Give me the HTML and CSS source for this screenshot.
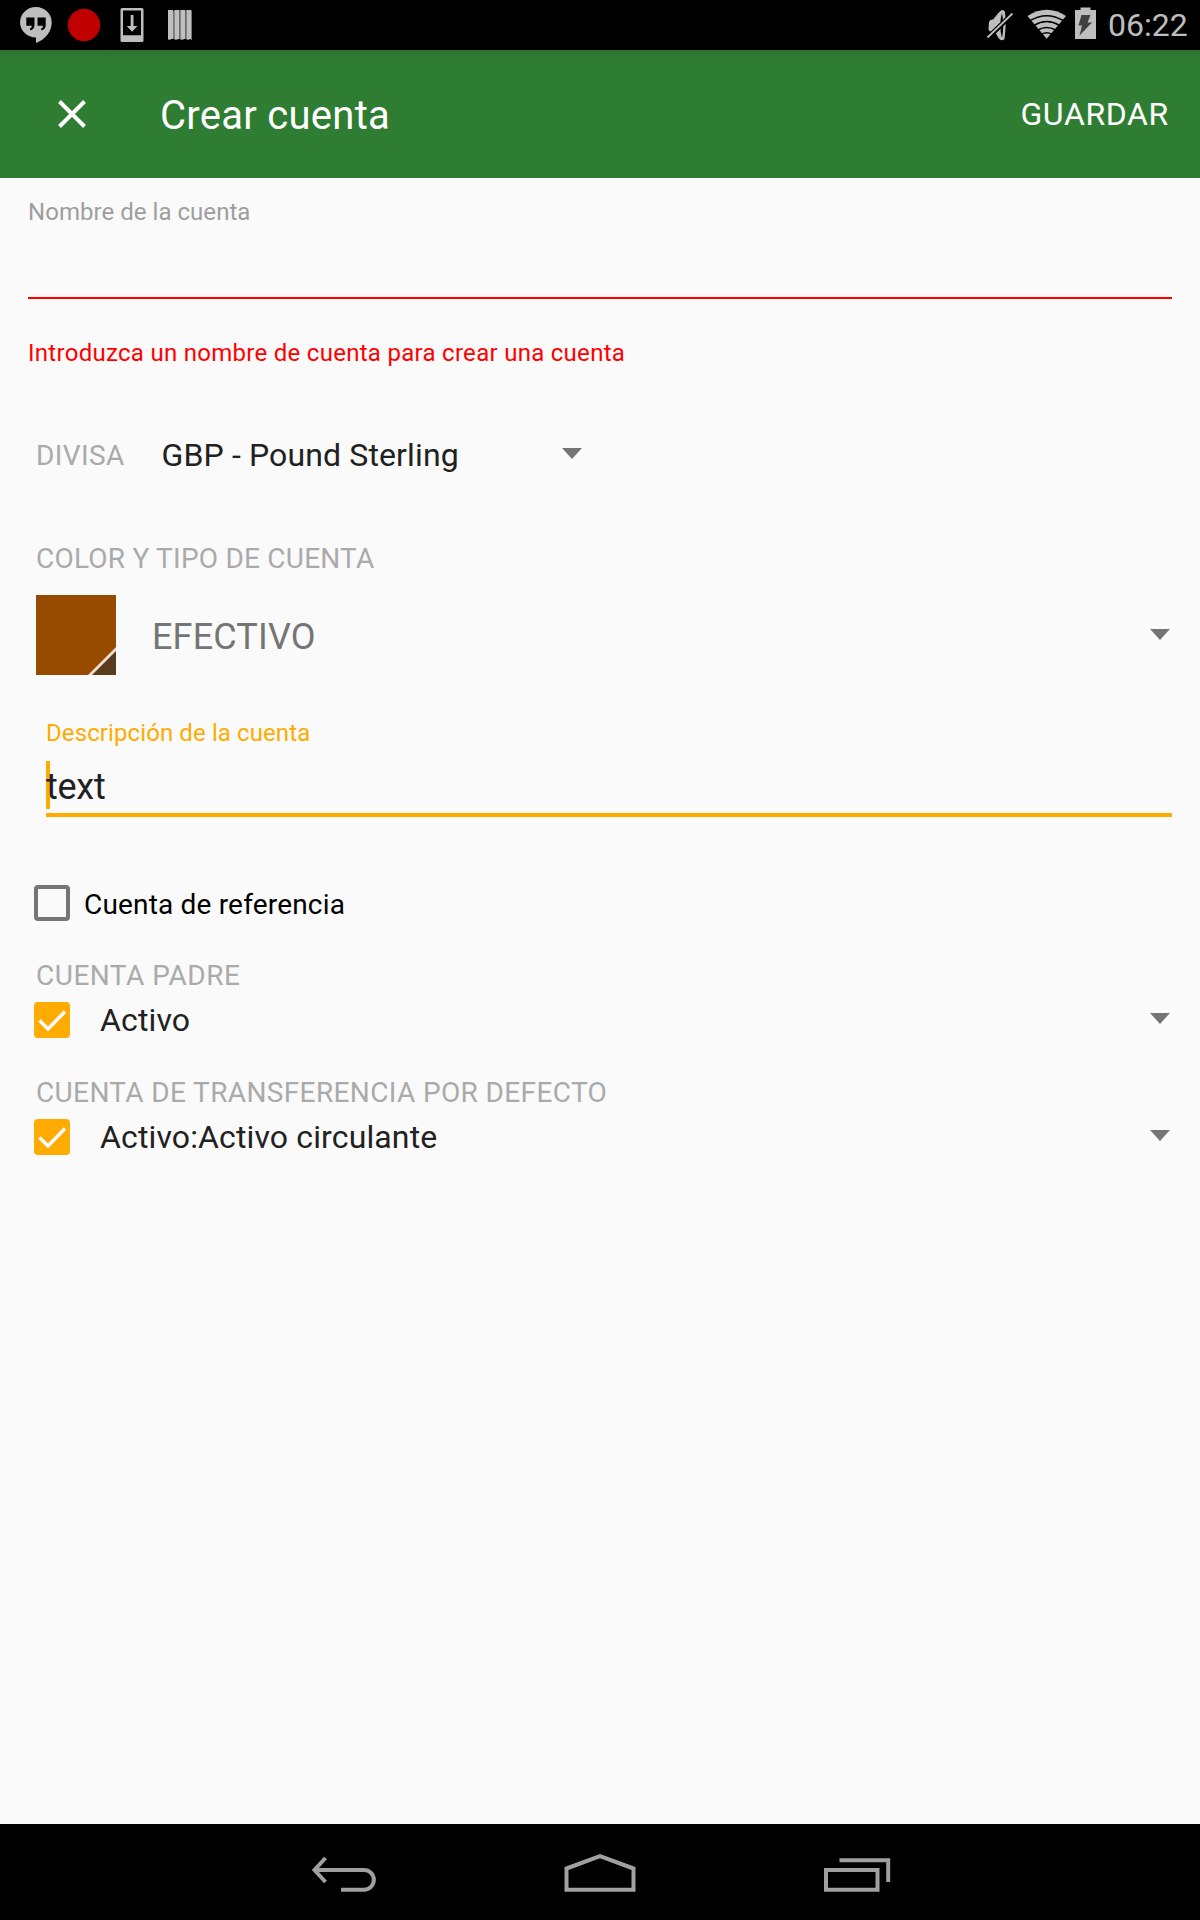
FILE: index.html
```html
<!DOCTYPE html>
<html lang="es">
<head>
<meta charset="utf-8">
<title>Crear cuenta</title>
<link rel="stylesheet" href="styles.css">
</head>
<body>
<div class="screen">
  <header class="status">
    <svg class="status-icons" width="200" height="50" viewBox="0 0 200 50">
      <path fill="#bebebe" fill-rule="evenodd" d="M36 7a15.700 15 0 0 0 0 30.500v5.500c9-3.500 15.700-11 15.700-20.500A15.700 15.500 0 0 0 36 7zM26.300 17.500h8.200v7.500c0 3-1.600 5-4.500 5.500v-2c1.300-.5 1.800-1.300 1.800-2.800h-5.500zM37.500 17.500h8.200v7.500c0 3-1.600 5-4.500 5.500v-2c1.300-.5 1.800-1.300 1.800-2.800h-5.500z"/>
      <circle cx="84" cy="25" r="16.200" fill="#c00000"/>
      <path fill="#bebebe" fill-rule="evenodd" d="M122 8h20a1.500 1.500 0 0 1 1.500 1.500v31a1.500 1.500 0 0 1-1.500 1.500h-20a1.500 1.500 0 0 1-1.500-1.500v-31a1.500 1.500 0 0 1 1.500-1.500zM123 10.500v24.700h18V10.500z"/>
      <path fill="#bebebe" d="M130.700 15h2.800v11h4l-5.400 5.700-5.400-5.700h4z"/>
      <g fill="#bebebe"><path d="M168 10h5v29h-5zM174.300 10h5v29h-5zM180.300 10h5v29h-5zM186.300 10h5v29h-5z"/></g>
      <path fill="#777" d="M173 11h1v28h-1zM179.200 11h1v28h-1zM185.200 11h1v28h-1zM191 11h1v29h-1zM168 39h3v1h-3zM174.500 39h3v1h-3zM180.500 39h3v1h-3zM186.500 39h3v1h-3z"/>
    </svg>
    <div class="status-right">
      <svg width="120" height="50" viewBox="980 0 120 50">
        <path fill="#bebebe" fill-rule="evenodd" d="M989 22q1-3 4-2.500l5-6q5-6 7-1.500q1.500 12-.5 27q-3 3-6-1l-4-7q-6 2-6-2.500zM1002 13q-3.500 12 0 25q2.500-12 0-25z"/>
        <path d="M987 38.500l26-25" stroke="#000" stroke-width="5"/>
        <path d="M987.500 37.500l25-24" stroke="#bebebe" stroke-width="1.800"/>
        <path fill="#bebebe" d="M1046.700 38.800L1027.500 16q19.200-12.500 38.500 0z"/>
        <g fill="none" stroke="#000" stroke-width="1.500"><path d="M1030 20.700q16.700-10 33.500 0M1034 25.300q12.700-7.500 25.500 0M1038 30q8.700-5 17.500 0M1041.500 34.300q5.200-3 10.500 0"/></g>
        <path fill="#bebebe" d="M1075 10h5.500V7.500h10V10h5.500v29h-21z"/>
        <path fill="#404040" d="M1081.500 15h9l-3 7.500h4.500l-12.500 13 2.500-10h-3.500z"/>
      </svg>
      <span class="clock">06:22</span>
    </div>
  </header>
  <div class="appbar">
    <svg class="close" width="28" height="28" viewBox="0 0 28 28"><path d="M1.500 1.500l25 25M26.500 1.500l-25 25" stroke="#fff" stroke-width="4"/></svg>
    <h1 class="title">Crear cuenta</h1>
    <span class="save">GUARDAR</span>
  </div>
  <main class="form">
    <div class="name-field">
      <div class="hint">Nombre de la cuenta</div>
      <div class="name-input"></div>
      <div class="hint error">Introduzca un nombre de cuenta para crear una cuenta</div>
    </div>
    <div class="currency">
      <span class="label">DIVISA</span>
      <span class="value">GBP - Pound Sterling</span>
      <i class="arrow"></i>
    </div>
    <div class="label type-label">COLOR Y TIPO DE CUENTA</div>
    <div class="type-row">
      <svg width="80" height="80" viewBox="0 0 80 80"><path fill="#964b00" d="M0 0h80v80H0z"/><path fill="#5a3c1e" d="M80 54.500V80H54.500z"/><path d="M81 53L53 81" stroke="#efdfd2" stroke-width="2.800"/></svg>
      <span class="type">EFECTIVO</span>
      <i class="arrow"></i>
    </div>
    <div class="desc-field">
      <div class="hint accent">Descripción de la cuenta</div>
      <div class="desc-input"><i class="cursor"></i>text</div>
    </div>
    <div class="check-row placeholder-row">
      <i class="box"></i><span class="check-text">Cuenta de referencia</span>
    </div>
    <div class="group parent">
      <div class="label">CUENTA PADRE</div>
      <div class="check-row">
        <svg class="box-on" width="36" height="36" viewBox="0 0 36 36"><path d="M5.500 18.500l8.500 8.500L31 9.500" fill="none" stroke="#fafafa" stroke-width="3.600"/></svg>
        <span class="value">Activo</span><i class="arrow"></i>
      </div>
    </div>
    <div class="group">
      <div class="label">CUENTA DE TRANSFERENCIA POR DEFECTO</div>
      <div class="check-row">
        <svg class="box-on" width="36" height="36" viewBox="0 0 36 36"><path d="M5.500 18.500l8.500 8.500L31 9.500" fill="none" stroke="#fafafa" stroke-width="3.600"/></svg>
        <span class="value">Activo:Activo circulante</span><i class="arrow"></i>
      </div>
    </div>
  </main>
  <nav class="navbar">
    <svg width="66" height="40" viewBox="311 1853 66 40" fill="none" stroke="#a0a0a0" stroke-width="4"><path d="M325.500 1858l-11 12 11 12M314 1870h50a9.800 9.800 0 0 1 0 19.700h-23"/></svg>
    <svg width="72" height="40" viewBox="564 1853 72 40" fill="none" stroke="#a0a0a0" stroke-width="4"><path d="M566.500 1889.700v-21.200l33.500-12.300 33.500 12.300v21.200z"/></svg>
    <svg width="68" height="40" viewBox="824 1853 68 40" fill="none" stroke="#a0a0a0" stroke-width="4"><path d="M827 1870h51.500v19.700H827zM840.500 1860.200h48.700v21.800"/></svg>
  </nav>
</div>
</body>
</html>
```
FILE: styles.css
```css
* { box-sizing: border-box; }
body { margin: 0; font-family: Roboto, sans-serif; color: #212121; }
.screen { width: 1200px; height: 1920px; display: flex; flex-direction: column; background: #fafafa; }
svg { display: block; flex: none; }

.status { height: 50px; background: #000; display: flex; justify-content: space-between; }
.status-right { display: flex; width: 220px; }
.clock { font-size: 32px; line-height: 50px; color: #bebebe; margin-left: 8px; }

.appbar { height: 128px; background: linear-gradient(#2a702e, #2e7d32 8px); display: flex; align-items: center; padding: 0 31px 0 58px; color: #fff; }
.title { margin: 4px 0 0 74px; font-size: 40px; font-weight: 400; line-height: 48px; letter-spacing: .27px; }
.save { margin-left: auto; font-size: 32px; line-height: 40px; letter-spacing: .65px; }

.form { flex: 1; display: flex; flex-direction: column; }
.name-field { padding: 19px 28px 0; }
.hint { font-size: 24px; line-height: 30px; color: #9e9e9e; letter-spacing: .04px; }
.name-input { height: 72px; border-bottom: 2px solid #f00; }
.error { color: #f00; margin-top: 39px; letter-spacing: .285px; }
.label { font-size: 28px; line-height: 34px; color: #aaa; letter-spacing: .37px; }
.value { font-size: 32px; line-height: 40px; letter-spacing: .13px; }
.arrow { border: 10px solid transparent; border-top: 11px solid #757575; border-bottom: 0; margin: 0 0 3px auto; }

.currency { display: flex; align-items: center; width: 582px; height: 40px; margin-top: 67px; padding-left: 36px; }
.currency .label { margin-top: 2px; }
.currency .value { margin-left: 37px; }
.type-label { margin: 67px 0 19px 36px; letter-spacing: .22px; }
.type-row { display: flex; align-items: center; height: 80px; padding: 0 30px 0 36px; }
.type-row .arrow { margin-bottom: 1px; }
.type { font-size: 36px; color: #757575; margin: 4px 0 0 36px; letter-spacing: .15px; }

.desc-field { position: relative; z-index: 0; margin: 43px 28px 0 46px; }
.accent { color: #ffab00; letter-spacing: .1px; }
.desc-input { position: relative; height: 69px; padding-top: 13px; font-size: 36px; line-height: 53px; letter-spacing: -.25px; border-bottom: 4px solid #ffab00; }
.cursor { position: absolute; left: 0; top: 13px; width: 4px; height: 48px; background: #ffab00; z-index: -1; }

.check-row { display: flex; align-items: center; height: 36px; padding: 0 30px 0 34px; }
.placeholder-row { margin-top: 68px; }
.box { width: 36px; height: 36px; border: 4px solid #757575; border-radius: 4px; }
.check-text { font-size: 28px; line-height: 34px; color: #000; margin: 4px 0 0 14px; letter-spacing: .18px; }
.group { height: 79px; margin-top: 38px; }
.group .label { margin: 0 0 9px 36px; }
.parent .label { letter-spacing: .5px; }
.group .value { margin-left: 30px; }
.box-on { background: #ffab00; border-radius: 4px; }

.navbar { height: 96px; background: #000; display: flex; justify-content: center; gap: 187px; padding: 29px 0 0 2px; }
```
